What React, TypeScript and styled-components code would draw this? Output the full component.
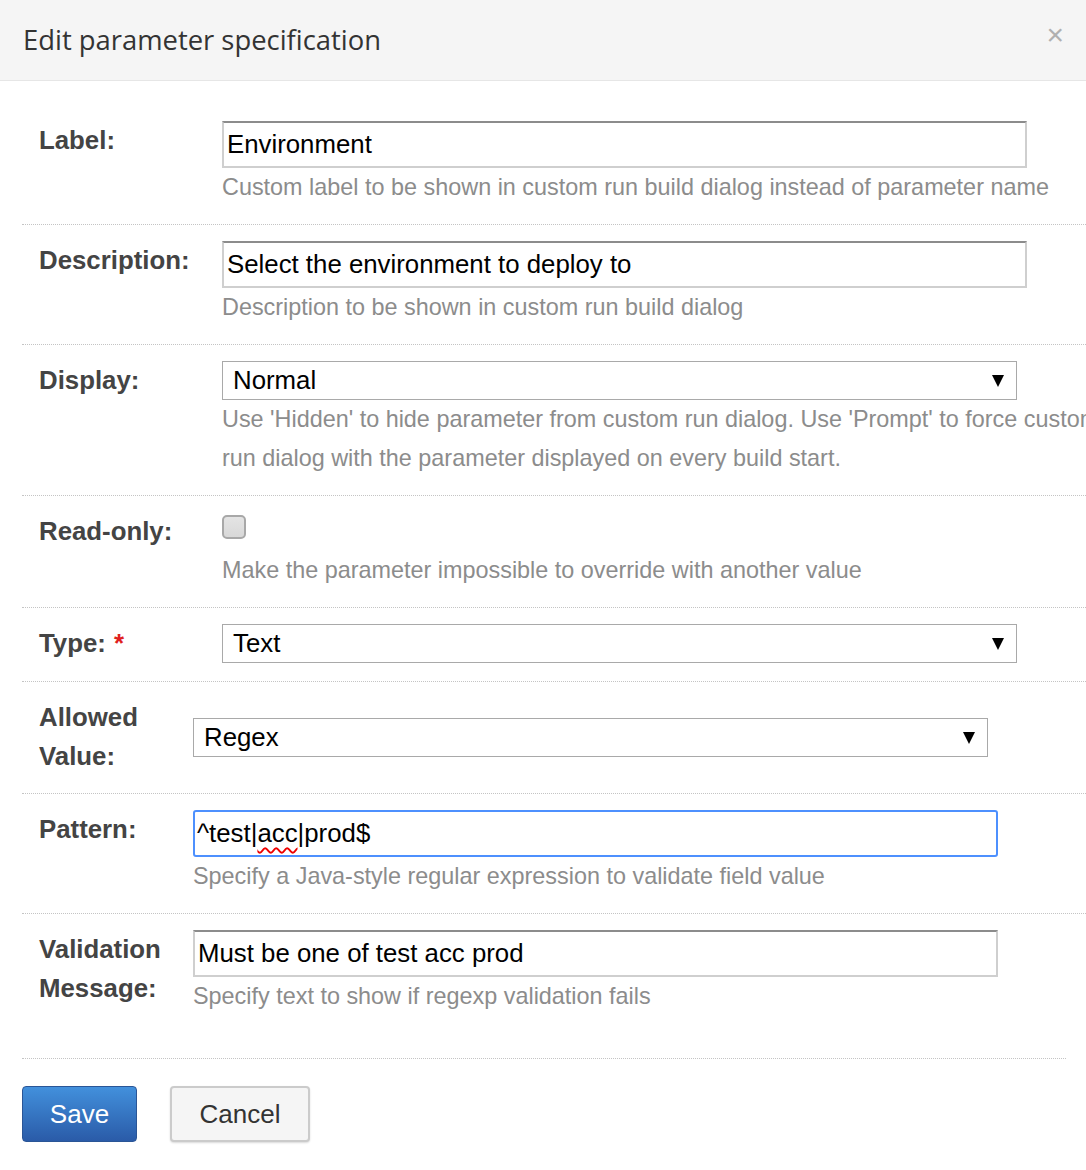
import React from 'react';
import styled, { createGlobalStyle } from 'styled-components';

const GlobalStyle = createGlobalStyle`
  html, body { margin: 0; padding: 0; background: #fff; }
  body {
    width: 1086px;
    height: 1170px;
    overflow: hidden;
    font-family: "Liberation Sans", Arial, sans-serif;
  }
  * { box-sizing: border-box; }
`;

const Dialog = styled.div`
  width: 1086px;
`;

const Header = styled.header`
  height: 81px;
  background: #f5f5f5;
  border-bottom: 1px solid #e6e6e6;
  display: flex;
  align-items: center;
  justify-content: space-between;
  padding: 0 22px 2px 23px;
`;

const Title = styled.h1`
  margin: 0;
  font-family: "Open Sans", sans-serif;
  font-weight: 400;
  font-size: 27.4px;
  color: #333;
`;

const Close = styled.span`
  font-family: "Liberation Sans", Arial, sans-serif;
  font-size: 30px;
  color: #b0b0b0;
  line-height: 1;
  margin-top: -8px;
`;

const Body = styled.div`
  padding: 24px 0 0 22px;
`;

const Row = styled.div<{ $label: number; $last?: boolean; $min?: number }>`
  display: grid;
  grid-template-columns: ${(p) => p.$label}px 900px;
  min-height: ${(p) => (p.$min ? `${p.$min}px` : 'auto')};
  padding: 16px 0 17px;
  border-bottom: ${(p) => (p.$last ? 'none' : '1px dotted #c4c4c4')};
`;

const Label = styled.div`
  padding-left: 17px;
  font-weight: 700;
  font-size: 25.8px;
  line-height: 39px;
  color: #444;
`;

const Required = styled.span`
  color: #e02020;
  font-weight: 700;
  margin-left: 8px;
`;

const Value = styled.div<{ $center?: boolean }>`
  display: flex;
  flex-direction: column;
  align-items: flex-start;
  align-self: ${(p) => (p.$center ? 'center' : 'start')};
`;

const TextField = styled.div<{ $focused?: boolean }>`
  width: 805px;
  height: 47px;
  border: 2px solid #cfcfcf;
  border-top-color: #8c8c8c;
  ${(p) => (p.$focused ? 'border-color: #4d90fe; border-radius: 3px;' : '')}
  padding: 0 ${(p) => (p.$focused ? '2px' : '3px')};
  display: flex;
  align-items: center;
  font-size: 25.8px;
  color: #000;
  white-space: nowrap;
  background: #fff;
`;

const Misspelled = styled.span`
  text-decoration: underline wavy #e00;
  text-decoration-thickness: 1.5px;
  text-underline-offset: 5px;
`;

const SelectBox = styled.div`
  width: 795px;
  height: 39px;
  border: 1px solid #a9a9a9;
  background: #fff;
  display: flex;
  align-items: center;
  justify-content: space-between;
  padding: 0 12px 0 10px;
  font-size: 25.8px;
  color: #000;
`;

const Arrow = styled.span`
  width: 0;
  height: 0;
  border-left: 6.5px solid transparent;
  border-right: 6.5px solid transparent;
  border-top: 12px solid #000;
  margin-top: 1px;
`;

const Hint = styled.div`
  font-size: 23.4px;
  line-height: 39px;
  color: #8c8c8c;
`;

const CheckArea = styled.div`
  height: 39px;
  padding-top: 3px;
`;

const Checkbox = styled.span`
  display: block;
  width: 24px;
  height: 24px;
  border: 2px solid #a8a8a8;
  border-radius: 5px;
  background: linear-gradient(#e4e4e4, #d8d8d8);
`;

const Footer = styled.div`
  width: 1044px;
  margin-top: 25px;
  border-top: 1px dotted #c4c4c4;
  padding-top: 27px;
  display: flex;
  gap: 33px;
`;

const Button = styled.button<{ $primary?: boolean }>`
  height: 56px;
  width: ${(p) => (p.$primary ? '115px' : '140px')};
  border-radius: 4px;
  font-family: "Liberation Sans", Arial, sans-serif;
  font-size: 26px;
  cursor: pointer;
  ${(p) =>
    p.$primary
      ? `
    color: #fff;
    background: linear-gradient(#4290dc, #2a5ba8);
    border: 1px solid #2a5596;
  `
      : `
    color: #333;
    background: #f5f5f5;
    border: 2px solid #cbcbcb;
    box-shadow: 0 1px 2px rgba(0,0,0,0.15);
  `}
`;

export default function App() {
  return (
    <Dialog>
      <GlobalStyle />
      <Header>
        <Title>Edit parameter specification</Title>
        <Close>×</Close>
      </Header>
      <Body>
        <Row $label={200}>
          <Label>Label:</Label>
          <Value>
            <TextField>Environment</TextField>
            <Hint>Custom label to be shown in custom run build dialog instead of parameter name</Hint>
          </Value>
        </Row>
        <Row $label={200}>
          <Label>Description:</Label>
          <Value>
            <TextField>Select the environment to deploy to</TextField>
            <Hint>Description to be shown in custom run build dialog</Hint>
          </Value>
        </Row>
        <Row $label={200}>
          <Label>Display:</Label>
          <Value>
            <SelectBox>
              <span>Normal</span>
              <Arrow />
            </SelectBox>
            <Hint>
              Use 'Hidden' to hide parameter from custom run dialog. Use 'Prompt' to force custom run dialog with the
              parameter displayed on every build start.
            </Hint>
          </Value>
        </Row>
        <Row $label={200}>
          <Label>Read-only:</Label>
          <Value>
            <CheckArea>
              <Checkbox />
            </CheckArea>
            <Hint>Make the parameter impossible to override with another value</Hint>
          </Value>
        </Row>
        <Row $label={200} $min={74}>
          <Label>
            Type:<Required>*</Required>
          </Label>
          <Value>
            <SelectBox>
              <span>Text</span>
              <Arrow />
            </SelectBox>
          </Value>
        </Row>
        <Row $label={171}>
          <Label>
            Allowed
            <br />
            Value:
          </Label>
          <Value $center>
            <SelectBox>
              <span>Regex</span>
              <Arrow />
            </SelectBox>
          </Value>
        </Row>
        <Row $label={171}>
          <Label>Pattern:</Label>
          <Value>
            <TextField $focused>
              ^test|<Misspelled>acc</Misspelled>|prod$
            </TextField>
            <Hint>Specify a Java-style regular expression to validate field value</Hint>
          </Value>
        </Row>
        <Row $label={171} $last>
          <Label>
            Validation
            <br />
            Message:
          </Label>
          <Value>
            <TextField>Must be one of test acc prod</TextField>
            <Hint>Specify text to show if regexp validation fails</Hint>
          </Value>
        </Row>
        <Footer>
          <Button $primary>Save</Button>
          <Button>Cancel</Button>
        </Footer>
      </Body>
    </Dialog>
  );
}
